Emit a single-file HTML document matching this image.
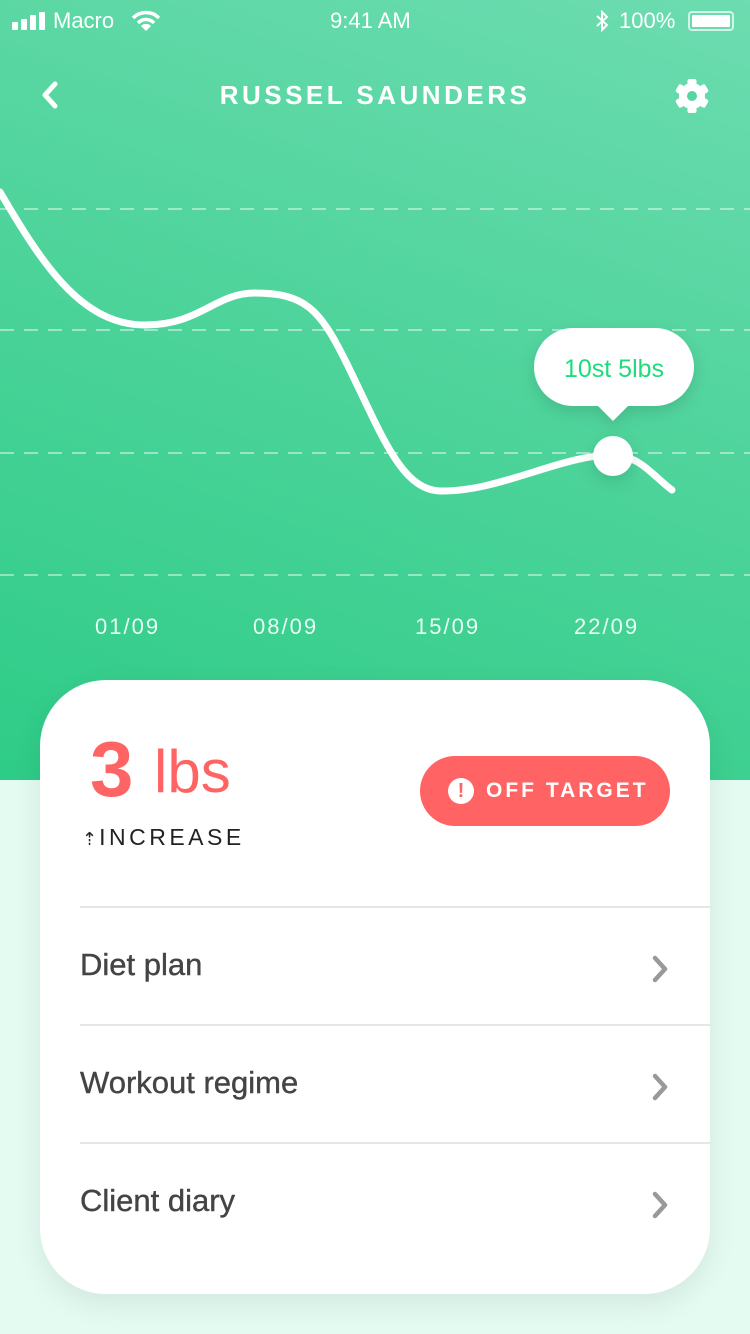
<!DOCTYPE html>
<html><head><meta charset="utf-8"><style>
*{margin:0;padding:0;box-sizing:border-box}
body{width:750px;height:1334px;overflow:hidden;background:#e4fbf2;font-family:"Liberation Sans",sans-serif;position:relative}
.top{position:absolute;left:0;top:0;width:750px;height:780px;background:linear-gradient(200deg,#6ddcb0 0%,#4fd49c 45%,#2ecc87 100%)}
.sb{position:absolute;top:8px;font-size:22px;color:#fff}
.title{position:absolute;top:80px;width:750px;text-align:center;color:#fff;font-size:26px;letter-spacing:3.5px;font-weight:bold}
.date{position:absolute;top:614px;color:#e6fff4;font-size:22px;letter-spacing:2px}
.card{position:absolute;left:40px;top:680px;width:670px;height:614px;background:#fff;border-radius:66px;box-shadow:0 10px 30px rgba(0,0,0,0.08)}
.row{position:absolute;left:40px;width:630px;height:118px;border-top:2px solid #e6e6e6;font-size:31px;color:#444;padding-top:39px;padding-left:0;-webkit-text-stroke:0.4px #444}
.row svg{position:absolute;right:40px;top:46px}
</style></head><body>
<div class="top"></div>
<svg style="position:absolute;left:12px;top:12px" width="36" height="18"><rect x="0" y="10" width="6" height="8" rx="1" fill="#fff"/><rect x="9" y="7" width="6" height="11" rx="1" fill="#fff"/><rect x="18" y="3" width="6" height="15" rx="1" fill="#fff"/><rect x="27" y="0" width="6" height="18" rx="1" fill="#fff"/></svg>
<div class="sb" style="left:53px">Macro</div>
<svg style="position:absolute;left:131px;top:10px" width="30" height="22" viewBox="0 0 30 22"><path d="M2 8 A18 18 0 0 1 28 8" stroke="#fff" stroke-width="3.5" fill="none"/><path d="M7 13 A11 11 0 0 1 23 13" stroke="#fff" stroke-width="3.5" fill="none"/><path d="M15 21 L10 16 A7 7 0 0 1 20 16 Z" fill="#fff"/></svg>
<div class="sb" style="left:330px">9:41 AM</div>
<svg style="position:absolute;left:595px;top:10px" width="14" height="22" viewBox="0 0 14 22"><path d="M2 6 L12 15 L7 20 L7 2 L12 7 L2 16" stroke="#fff" stroke-width="2" fill="none"/></svg>
<div class="sb" style="left:619px">100%</div>
<div style="position:absolute;left:688px;top:11px;width:46px;height:20px;border:2px solid rgba(255,255,255,.7);border-radius:4px;padding:2px"><div style="width:100%;height:100%;background:#fff;border-radius:1px"></div></div>
<svg style="position:absolute;left:38px;top:80px" width="24" height="30" viewBox="0 0 24 30"><path d="M17 4 L7 15 L17 26" stroke="#fff" stroke-width="5" fill="none" stroke-linecap="round" stroke-linejoin="round"/></svg>
<div class="title">RUSSEL SAUNDERS</div>
<svg style="position:absolute;left:673px;top:77px" width="38" height="38" viewBox="0 0 38 38"><g fill="#fff" transform="translate(19 19)"><circle r="13"/><rect x="-4.5" y="-17" width="9" height="34" rx="2"/><rect x="-4.5" y="-17" width="9" height="34" rx="2" transform="rotate(60)"/><rect x="-4.5" y="-17" width="9" height="34" rx="2" transform="rotate(120)"/></g><circle cx="19" cy="19" r="5" fill="#55d6a0"/></svg>
<svg style="position:absolute;left:0;top:0" width="750" height="780">
<defs><filter id="sh" x="-30%" y="-30%" width="160%" height="180%"><feDropShadow dx="0" dy="6" stdDeviation="8" flood-color="#000" flood-opacity="0.12"/></filter></defs>
<g stroke="rgba(255,255,255,0.45)" stroke-width="2" stroke-dasharray="14 10"><line x1="0" y1="209" x2="750" y2="209"/><line x1="0" y1="330" x2="750" y2="330"/><line x1="0" y1="453" x2="750" y2="453"/><line x1="0" y1="575" x2="750" y2="575"/></g>
<path d="M0 192 C40 260,80 325,145 325 C200 325,215 293,255 293 C305 293,320 310,345 360 C380 430,400 490,440 491 C500 492,560 455,613 455 C640 455,655 478,672 490" stroke="#fff" stroke-width="7" fill="none" stroke-linecap="round"/>
<g filter="url(#sh)"><rect x="534" y="328" width="160" height="78" rx="39" fill="#fff"/><path d="M596 404 L613 421 L630 404 Z" fill="#fff"/><circle cx="613" cy="456" r="20" fill="#fff"/></g>
<text x="614" y="377" text-anchor="middle" font-family="Liberation Sans" font-size="25" fill="#1edc7c">10st 5lbs</text>
</svg>
<div class="date" style="left:95px">01/09</div>
<div class="date" style="left:253px">08/09</div>
<div class="date" style="left:415px">15/09</div>
<div class="date" style="left:574px">22/09</div>
<div class="card">
<div style="position:absolute;left:50px;top:50px;color:#ff6464;font-size:78px;font-weight:bold;line-height:1">3</div>
<div style="position:absolute;left:114px;top:62px;color:#ff6464;font-size:60px;line-height:1">lbs</div>
<div style="position:absolute;left:42px;top:144px;color:#222;font-size:23px;letter-spacing:3.5px"><span style="font-size:18px;letter-spacing:2px">⇡</span>INCREASE</div>
<div style="position:absolute;left:380px;top:76px;width:250px;height:70px;border-radius:35px;background:#ff6363;color:#fff;font-size:21px;font-weight:bold;letter-spacing:3px;padding:23px 0 0 66px">OFF TARGET</div>
<div style="position:absolute;left:408px;top:98px;width:26px;height:26px;border-radius:50%;background:#fff;color:#ff6363;font-weight:bold;font-size:20px;text-align:center;line-height:26px">!</div>
<div class="row" style="top:226px">Diet plan<svg width="20" height="30" viewBox="0 0 20 30"><path d="M5 4 L15 15 L5 26" stroke="#999" stroke-width="4.5" fill="none" stroke-linecap="round" stroke-linejoin="round"/></svg></div>
<div class="row" style="top:344px">Workout regime<svg width="20" height="30" viewBox="0 0 20 30"><path d="M5 4 L15 15 L5 26" stroke="#999" stroke-width="4.5" fill="none" stroke-linecap="round" stroke-linejoin="round"/></svg></div>
<div class="row" style="top:462px">Client diary<svg width="20" height="30" viewBox="0 0 20 30"><path d="M5 4 L15 15 L5 26" stroke="#999" stroke-width="4.5" fill="none" stroke-linecap="round" stroke-linejoin="round"/></svg></div>
</div>
</body></html>
